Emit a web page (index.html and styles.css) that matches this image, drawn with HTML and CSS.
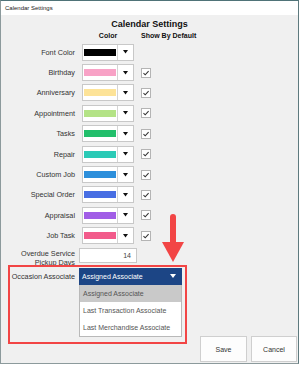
FILE: index.html
```html
<!DOCTYPE html>
<html lang="en">
<head>
  <meta charset="UTF-8">
  <title>Calendar Settings</title>
  <link rel="stylesheet" href="styles.css">
</head>
<body>
  <div class="window">
    <div class="titlebar">Calendar Settings</div>
    <div class="content">
      <h1>Calendar Settings</h1>
      <div class="grid head">
        <span></span>
        <span class="col-color">Color</span>
        <span class="col-show">Show By Default</span>
      </div>

      <div class="grid rows">
        <label>Font Color</label>
        <div class="combo"><span class="swatch" style="background:#000000"></span><span class="drop"><svg width="5" height="4" viewBox="0 0 5 4"><path d="M0 0H5L2.5 3.5Z"/></svg></span></div>
        <span></span>

        <label>Birthday</label>
        <div class="combo"><span class="swatch" style="background:#f8a2c6"></span><span class="drop"><svg width="5" height="4" viewBox="0 0 5 4"><path d="M0 0H5L2.5 3.5Z"/></svg></span></div>
        <span class="check"><svg width="8" height="8" viewBox="0 0 8 8"><path d="M1.5 4.2L3.2 5.8L6.6 2.2"/></svg></span>

        <label>Anniversary</label>
        <div class="combo"><span class="swatch" style="background:#fde398"></span><span class="drop"><svg width="5" height="4" viewBox="0 0 5 4"><path d="M0 0H5L2.5 3.5Z"/></svg></span></div>
        <span class="check"><svg width="8" height="8" viewBox="0 0 8 8"><path d="M1.5 4.2L3.2 5.8L6.6 2.2"/></svg></span>

        <label>Appointment</label>
        <div class="combo"><span class="swatch" style="background:#b4e386"></span><span class="drop"><svg width="5" height="4" viewBox="0 0 5 4"><path d="M0 0H5L2.5 3.5Z"/></svg></span></div>
        <span class="check"><svg width="8" height="8" viewBox="0 0 8 8"><path d="M1.5 4.2L3.2 5.8L6.6 2.2"/></svg></span>

        <label>Tasks</label>
        <div class="combo"><span class="swatch" style="background:#22bf6b"></span><span class="drop"><svg width="5" height="4" viewBox="0 0 5 4"><path d="M0 0H5L2.5 3.5Z"/></svg></span></div>
        <span class="check"><svg width="8" height="8" viewBox="0 0 8 8"><path d="M1.5 4.2L3.2 5.8L6.6 2.2"/></svg></span>

        <label>Repair</label>
        <div class="combo"><span class="swatch" style="background:#2bcab6"></span><span class="drop"><svg width="5" height="4" viewBox="0 0 5 4"><path d="M0 0H5L2.5 3.5Z"/></svg></span></div>
        <span class="check"><svg width="8" height="8" viewBox="0 0 8 8"><path d="M1.5 4.2L3.2 5.8L6.6 2.2"/></svg></span>

        <label>Custom Job</label>
        <div class="combo"><span class="swatch" style="background:#2d8fdb"></span><span class="drop"><svg width="5" height="4" viewBox="0 0 5 4"><path d="M0 0H5L2.5 3.5Z"/></svg></span></div>
        <span class="check"><svg width="8" height="8" viewBox="0 0 8 8"><path d="M1.5 4.2L3.2 5.8L6.6 2.2"/></svg></span>

        <label>Special Order</label>
        <div class="combo"><span class="swatch" style="background:#476ee3"></span><span class="drop"><svg width="5" height="4" viewBox="0 0 5 4"><path d="M0 0H5L2.5 3.5Z"/></svg></span></div>
        <span class="check"><svg width="8" height="8" viewBox="0 0 8 8"><path d="M1.5 4.2L3.2 5.8L6.6 2.2"/></svg></span>

        <label>Appraisal</label>
        <div class="combo"><span class="swatch" style="background:#a15de6"></span><span class="drop"><svg width="5" height="4" viewBox="0 0 5 4"><path d="M0 0H5L2.5 3.5Z"/></svg></span></div>
        <span class="check"><svg width="8" height="8" viewBox="0 0 8 8"><path d="M1.5 4.2L3.2 5.8L6.6 2.2"/></svg></span>

        <label>Job Task</label>
        <div class="combo"><span class="swatch" style="background:#f25b8b"></span><span class="drop"><svg width="5" height="4" viewBox="0 0 5 4"><path d="M0 0H5L2.5 3.5Z"/></svg></span></div>
        <span class="check"><svg width="8" height="8" viewBox="0 0 8 8"><path d="M1.5 4.2L3.2 5.8L6.6 2.2"/></svg></span>
      </div>

      <div class="grid2 overdue">
        <label>Overdue Service<br>Pickup Days</label>
        <div class="textbox">14</div>
      </div>

      <div class="grid2 occasion">
        <label>Occasion Associate</label>
        <div class="select">
          <span>Assigned Associate</span>
          <svg width="6" height="4" viewBox="0 0 6 4"><path d="M0 0H6L3 4Z"/></svg>
          <ul class="list">
            <li class="hover">Assigned Associate</li>
            <li>Last Transaction Associate</li>
            <li>Last Merchandise Associate</li>
          </ul>
        </div>
      </div>

      <div class="footer">
        <button class="btn save">Save</button>
        <button class="btn cancel">Cancel</button>
      </div>
    </div>

    <!-- annotation -->
    <div class="mark"></div>
    <svg class="arrow" width="24" height="50" viewBox="0 0 24 50">
      <path d="M8 3a3 3 0 0 1 6 0V30H8Z"/>
      <path d="M0 28H22L11 48Z"/>
    </svg>
  </div>
</body>
</html>
```

FILE: styles.css
```css
* {
  box-sizing: border-box;
}
body {
  margin: 0;
  font-family: "Liberation Sans", Arial, sans-serif;
  color: #2b2b2b;
}
.window {
  position: relative;
  width: 299px;
  height: 364px;
  background: #f0f0f0;
  border: 1px solid #8c9a9c;
  border-top-color: #4f7378;
  border-right-color: #5e7a7e;
  display: flex;
  flex-direction: column;
}
.titlebar {
  height: 14px;
  background: #fff;
  font-size: 6px;
  line-height: 14px;
  padding-left: 4px;
  color: #222;
}
.content {
  flex: 1;
  display: flex;
  flex-direction: column;
}
h1 {
  margin: 3px 0 0;
  font-size: 9px;
  line-height: 12px;
  text-align: center;
  color: #111;
}
.grid {
  display: grid;
  grid-template-columns: 74px 52px 10px;
  column-gap: 7px;
}
.head {
  margin-top: 1px;
  font-size: 7px;
  font-weight: bold;
  line-height: 10px;
  color: #111;
}
.col-color {
  text-align: center;
}
.col-show {
  white-space: nowrap;
}
.rows {
  margin-top: 1px;
  grid-auto-rows: 20.4px;
  align-items: center;
}
label {
  font-size: 7.25px;
  text-align: right;
  color: #333333;
}
.combo {
  height: 17px;
  background: #fff;
  border: 1px solid #c8c8c8;
  display: flex;
  align-items: center;
  padding-left: 1px;
}
.swatch {
  width: 32px;
  height: 7px;
}
.drop {
  margin-left: 1px;
  height: 100%;
  flex: 1;
  border-left: 1px solid #d4d4d4;
  display: flex;
  align-items: center;
  justify-content: center;
}
.drop svg {
  fill: #111;
}
.check {
  width: 10px;
  height: 10px;
  border: 1px solid #b4b4b4;
  background: #fff;
  display: flex;
  align-items: center;
  justify-content: center;
}
.check svg {
  fill: none;
  stroke: #333;
  stroke-width: 1.1;
}
.grid2 {
  display: grid;
  grid-template-columns: 74px 103px;
  column-gap: 4px;
}
.overdue {
  margin-top: 2px;
  align-items: start;
}
.overdue label {
  line-height: 9px;
  padding-top: 1px;
}
.textbox {
  width: 58px;
  height: 15px;
  background: #fff;
  border: 1px solid #c8c8c8;
  font-size: 7px;
  line-height: 13px;
  text-align: right;
  padding-right: 5px;
  color: #444;
}
.occasion {
  margin-top: 1px;
  align-items: center;
}
.select {
  position: relative;
  height: 17px;
  background: #1c4585;
  color: #fff;
  font-size: 7px;
  display: flex;
  align-items: center;
  justify-content: space-between;
  padding: 0 6px 0 3px;
}
.select svg {
  fill: #fff;
}
.list {
  position: absolute;
  top: 100%;
  left: 0;
  width: 103px;
  margin: 0;
  padding: 0;
  list-style: none;
  background: #fff;
  border: 1px solid #b9b9b9;
  border-top: none;
}
.list li {
  height: 17px;
  line-height: 17px;
  padding-left: 3px;
  color: #555;
  white-space: nowrap;
}
.list .hover {
  background: #c9c9c9;
}
.footer {
  margin-top: auto;
  display: flex;
  justify-content: flex-end;
  gap: 4px;
  padding: 0 1px 1px 0;
}
.btn {
  height: 26px;
  background: #fdfdfd;
  border: 1px solid #cfcfcf;
  font-family: inherit;
  font-size: 7px;
  color: #333;
  padding: 0;
}
.save {
  width: 47px;
}
.cancel {
  width: 46px;
}
.mark {
  position: absolute;
  left: 7px;
  top: 264px;
  width: 179px;
  height: 79px;
  border: 2.5px solid #f24545;
}
.arrow {
  position: absolute;
  left: 161px;
  top: 213px;
  fill: #f24545;
}
```
